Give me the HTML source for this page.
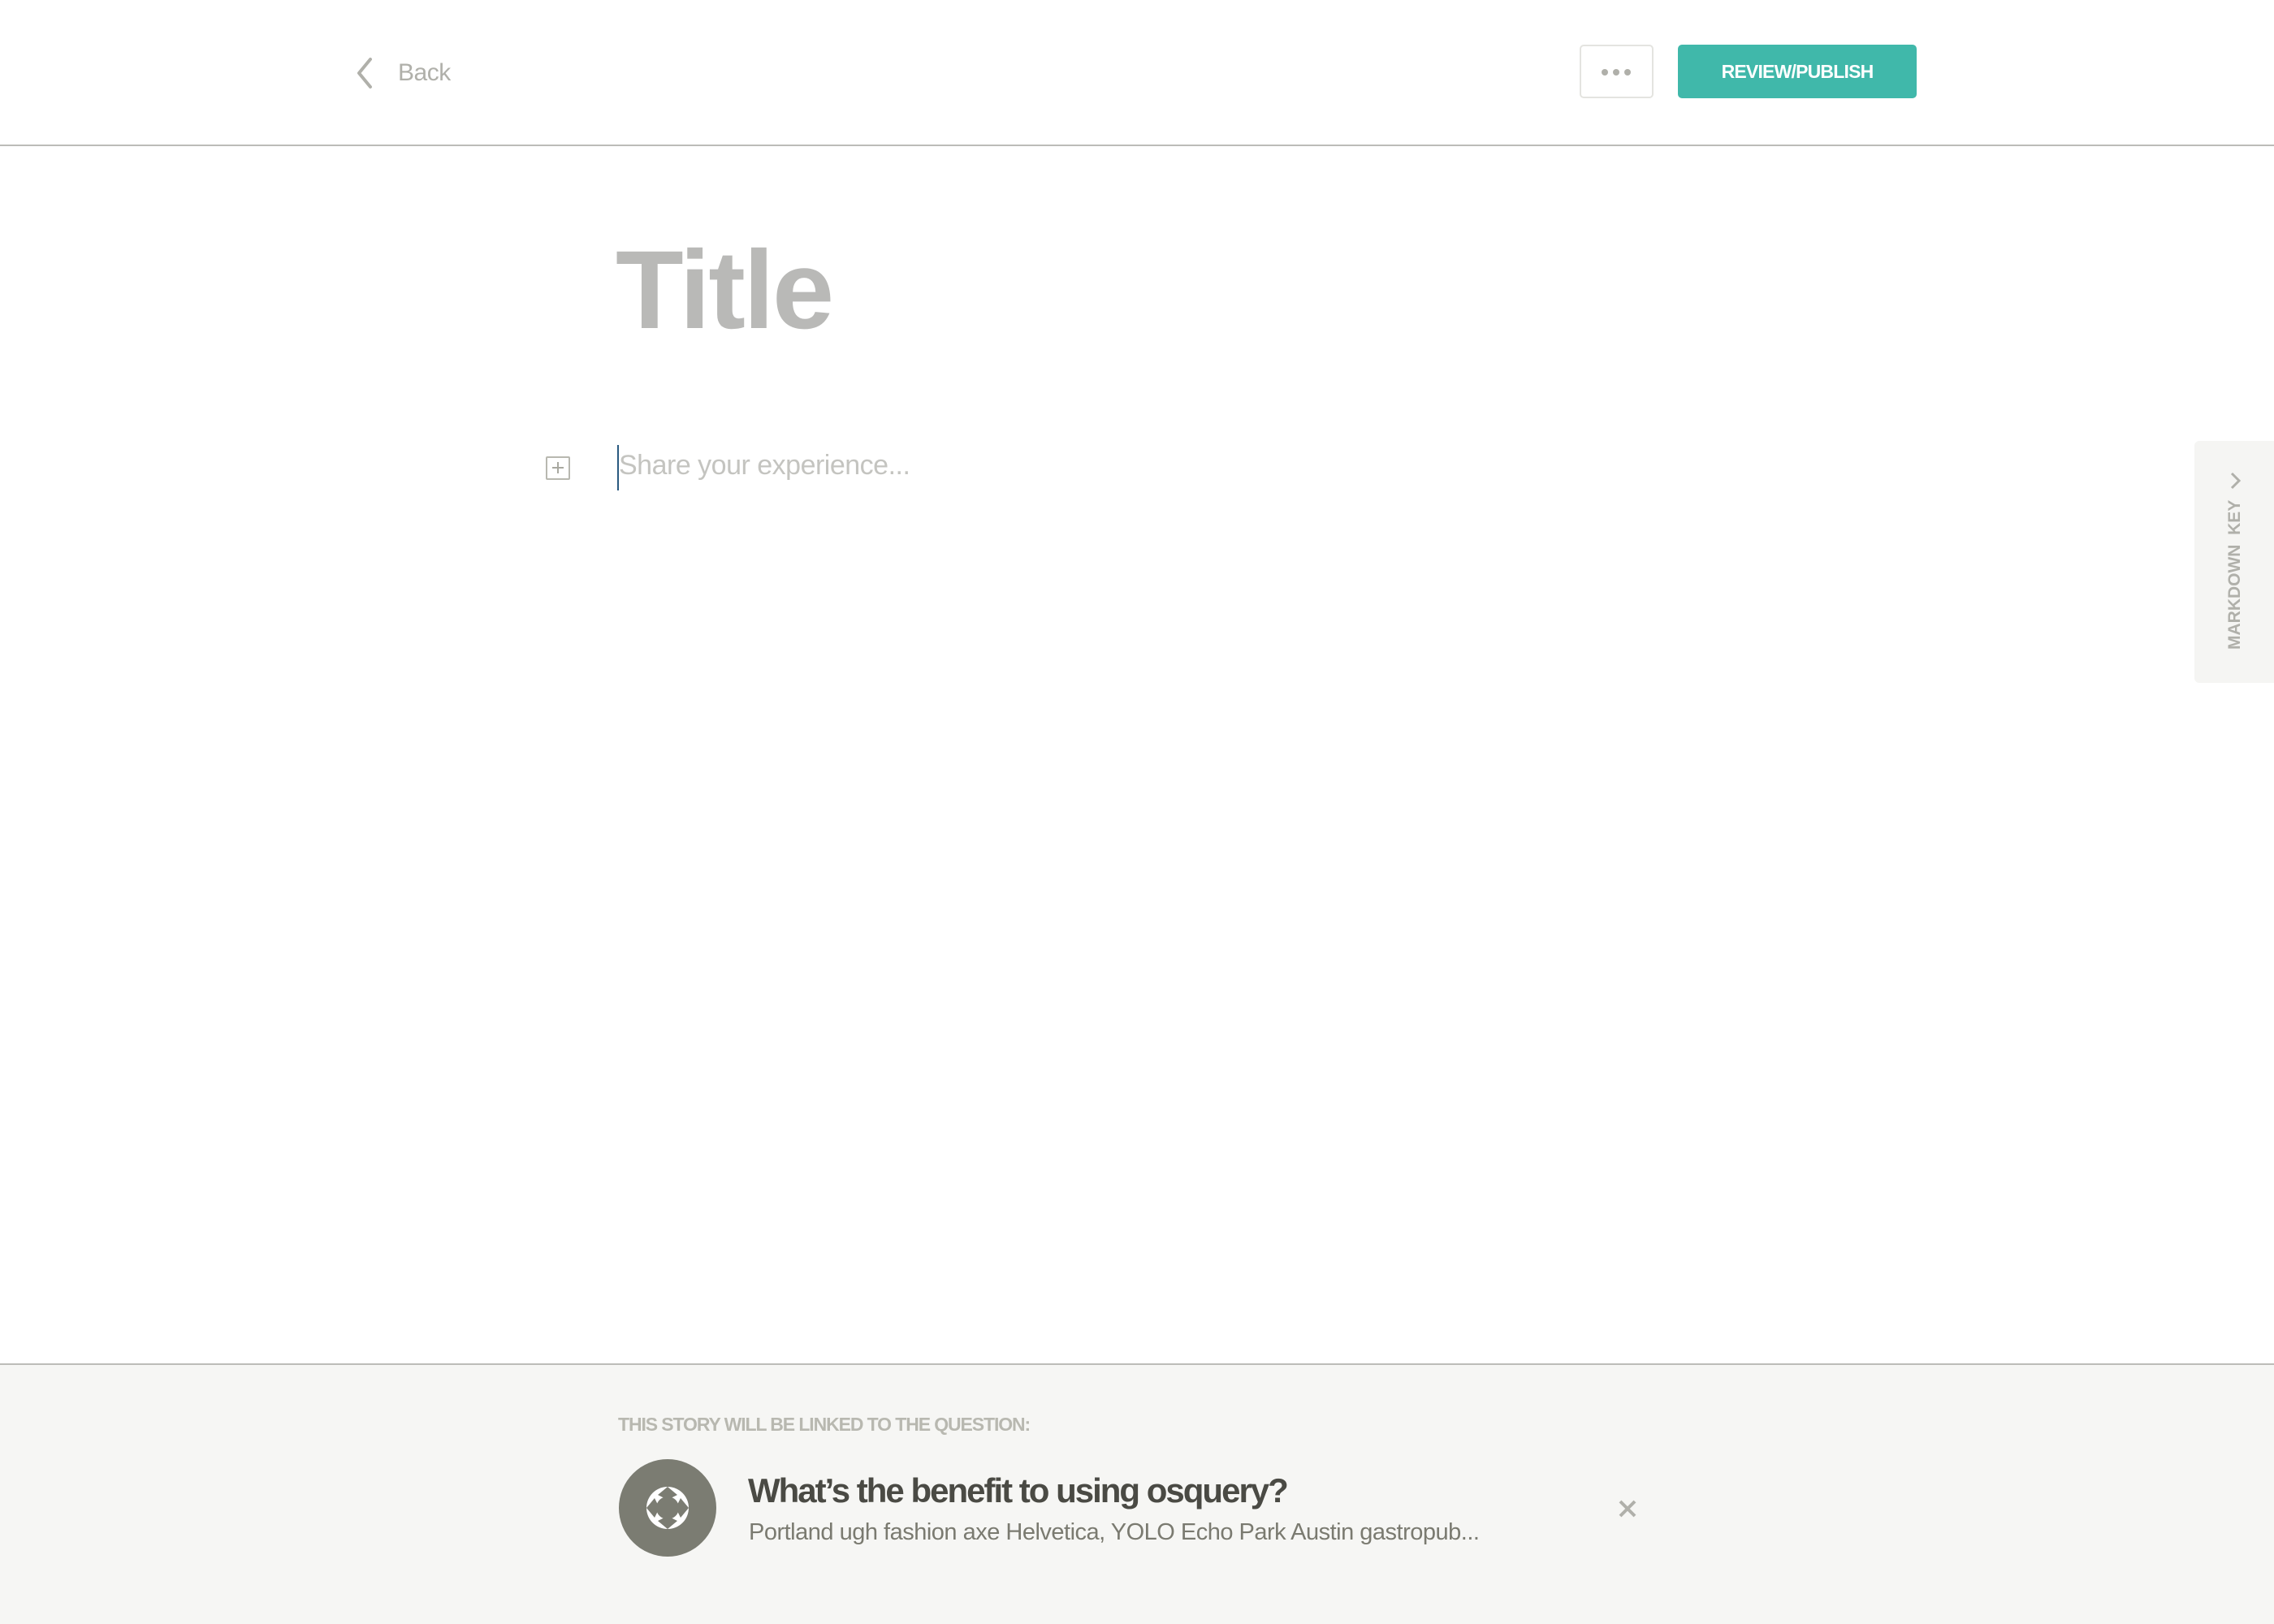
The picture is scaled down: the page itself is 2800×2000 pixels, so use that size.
<!DOCTYPE html>
<html><head><meta charset="utf-8"><style>
*{margin:0;padding:0;box-sizing:border-box}
body{width:2800px;height:2000px;background:#fff;font-family:"Liberation Sans",sans-serif;position:relative;overflow:hidden}
.abs{position:absolute}
</style></head><body>
<div class="abs" style="left:0;top:0;width:2800px;height:180px;border-bottom:2px solid #bcbcb8"></div>
<svg class="abs" style="left:434px;top:70px" width="30" height="40" viewBox="0 0 30 40"><path d="M22 3 L8 20 L22 37" fill="none" stroke="#b0b0aa" stroke-width="4" stroke-linecap="round" stroke-linejoin="round"/></svg>
<div class="abs" style="left:490px;top:70px;font-size:30px;color:#b0b0aa;line-height:40px;letter-spacing:-0.5px">Back</div>
<div class="abs" style="left:1945px;top:55px;width:91px;height:66px;border:2px solid #e4e4e0;border-radius:5px"></div>
<div class="abs" style="left:1972px;top:85px;width:8px;height:8px;border-radius:50%;background:#b0b0aa"></div>
<div class="abs" style="left:1986px;top:85px;width:8px;height:8px;border-radius:50%;background:#b0b0aa"></div>
<div class="abs" style="left:2000px;top:85px;width:8px;height:8px;border-radius:50%;background:#b0b0aa"></div>
<div class="abs" style="left:2066px;top:55px;width:294px;height:66px;background:#40b8aa;border-radius:5px;color:#fff;font-size:23px;font-weight:bold;text-align:center;line-height:66px;letter-spacing:-0.8px">REVIEW/PUBLISH</div>

<div class="abs" style="left:758px;top:278px;font-size:137px;font-weight:bold;color:#b9b9b7;line-height:160px;letter-spacing:-2.5px">Title</div>

<div class="abs" style="left:672px;top:562px;width:30px;height:29px;border:2px solid #b8b8b0;border-radius:2px"></div>
<div class="abs" style="left:680px;top:575px;width:14px;height:2px;background:#a8a8a0"></div>
<div class="abs" style="left:686px;top:569px;width:2px;height:14px;background:#a8a8a0"></div>
<div class="abs" style="left:760px;top:548px;width:2px;height:56px;background:#2a5a80"></div>
<div class="abs" style="left:762px;top:551px;font-size:34px;color:#c4c4c0;line-height:44px;letter-spacing:-0.5px">Share your experience...</div>

<div class="abs" style="left:2702px;top:543px;width:110px;height:298px;background:#f5f5f3;border-radius:6px"></div>
<div class="abs" style="left:2740px;top:800px;transform:rotate(-90deg);transform-origin:0 0;font-size:21px;color:#b0b0aa;font-weight:bold;white-space:nowrap;line-height:24px;width:184px">MARKDOWN&nbsp; KEY</div>
<svg class="abs" style="left:2743px;top:580px" width="20" height="24" viewBox="0 0 20 24"><path d="M5 3 L14 12 L5 21" fill="none" stroke="#b0b0aa" stroke-width="3"/></svg>

<div class="abs" style="left:0;top:1679px;width:2800px;height:321px;background:#f6f6f4;border-top:2px solid #bcbcb8"></div>
<div class="abs" style="left:761px;top:1740px;font-size:23px;font-weight:bold;color:#b8b8b0;letter-spacing:-1.1px;line-height:28px">THIS STORY WILL BE LINKED TO THE QUESTION:</div>
<div class="abs" style="left:762px;top:1797px;width:120px;height:120px;border-radius:50%;background:#7b7c72"></div>
<svg class="abs" style="left:762px;top:1797px" width="120" height="120" viewBox="0 0 120 120">
<circle cx="60" cy="60" r="26" fill="#fff"/><circle cx="60" cy="60" r="14" fill="#7b7c72"/>
<path d="M34 60 L44 48 L50 60 L44 72Z M86 60 L76 48 L70 60 L76 72Z M60 34 L48 44 L60 50 L72 44Z M60 86 L48 76 L60 70 L72 76Z" fill="#7b7c72"/>
</svg>
<div class="abs" style="left:921px;top:1810px;font-size:42px;font-weight:bold;color:#4a4a44;letter-spacing:-2px;line-height:52px">What’s the benefit to using osquery?</div>
<div class="abs" style="left:922px;top:1869px;font-size:29px;color:#7a7a70;letter-spacing:-0.5px;line-height:36px">Portland ugh fashion axe Helvetica, YOLO Echo Park Austin gastropub...</div>
<svg class="abs" style="left:1992px;top:1846px" width="24" height="24" viewBox="0 0 24 24"><path d="M3 3 L21 21 M21 3 L3 21" stroke="#b0b0aa" stroke-width="4"/></svg>
</body></html>
